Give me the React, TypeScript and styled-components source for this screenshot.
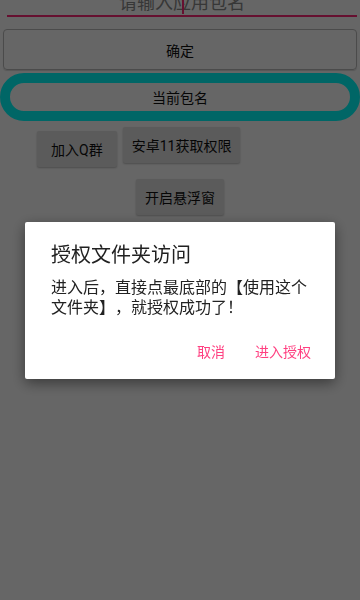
import React from 'react';
import styled, { createGlobalStyle } from 'styled-components';

const GlobalStyle = createGlobalStyle`
  html, body {
    margin: 0;
    padding: 0;
    background: #ffffff;
    font-family: Roboto, "Noto Sans CJK SC", sans-serif;
    overflow: hidden;
    text-spacing-trim: space-all;
  }
`;

const Page = styled.div`
  display: flex;
  flex-direction: column;
  margin-top: -13px;
  min-height: 613px;
  background: #ffffff;
`;

const InputField = styled.div`
  position: relative;
  margin: 0 3px 0 7px;
  height: 28px;
  border-bottom: 2px solid #ff2a78;
  display: flex;
  align-items: center;
  justify-content: center;
  font-size: 18px;
  color: #8a8a8a;
`;

const Caret = styled.span`
  position: absolute;
  left: 175px;
  top: 13px;
  width: 2px;
  height: 14px;
  background: #ff2a78;
`;

const WideButton = styled.div`
  margin: 12px 3px 0 3px;
  height: 39px;
  border: 1px solid #bcbcbc;
  border-radius: 4px;
  display: flex;
  align-items: center;
  justify-content: center;
  font-size: 14px;
  color: #111;
  box-shadow: 0 1px 1px rgba(0, 0, 0, 0.15);
`;

const PillButton = styled.div`
  margin-top: 3px;
  height: 28px;
  border: 10px solid #00ffff;
  border-radius: 24px;
  display: flex;
  align-items: center;
  justify-content: center;
  font-size: 14px;
  color: #111;
`;

const ButtonRow = styled.div<{ $center?: boolean }>`
  display: flex;
  gap: 6px;
  align-items: flex-start;
  justify-content: ${({ $center }) => ($center ? 'center' : 'flex-start')};
  padding-left: ${({ $center }) => ($center ? '0' : '37px')};
  margin-top: ${({ $center }) => ($center ? '12px' : '6px')};
`;

const GreyButton = styled.div<{ $drop?: number }>`
  height: 36px;
  padding: 0 ${({ $drop }) => ($drop ? '14px' : '9px')};
  margin-top: ${({ $drop }) => $drop || 0}px;
  background: #e3e3e3;
  border-radius: 2px;
  box-shadow: 0 1px 2px rgba(0, 0, 0, 0.25);
  display: flex;
  align-items: center;
  justify-content: center;
  font-size: 14px;
  color: #111;
`;

const Overlay = styled.div`
  position: fixed;
  inset: 0;
  background: rgba(0, 0, 0, 0.6);
  display: flex;
  align-items: center;
  justify-content: center;
`;

const Dialog = styled.div`
  width: 310px;
  box-sizing: border-box;
  padding: 20px 24px 10px 26px;
  background: #ffffff;
  border-radius: 2px;
  box-shadow: 0 4px 14px rgba(0, 0, 0, 0.45);
`;

const Title = styled.div`
  font-size: 20px;
  line-height: 26px;
  color: #212121;
`;

const Message = styled.div`
  margin-top: 10px;
  font-size: 16px;
  line-height: 20.5px;
  color: #222;
  text-spacing-trim: space-all;
`;

const Actions = styled.div`
  margin-top: 14px;
  display: flex;
  justify-content: flex-end;
  gap: 30px;
  height: 36px;
  align-items: center;
`;

const ActionButton = styled.div`
  font-size: 14px;
  color: #ff4081;
`;

const App: React.FC = () => {
  return (
    <>
      <GlobalStyle />
      <Page>
        <InputField>
          请输入应用包名
          <Caret />
        </InputField>
        <WideButton>确定</WideButton>
        <PillButton>当前包名</PillButton>
        <ButtonRow>
          <GreyButton $drop={4}>加入Q群</GreyButton>
          <GreyButton>安卓11获取权限</GreyButton>
        </ButtonRow>
        <ButtonRow $center>
          <GreyButton>开启悬浮窗</GreyButton>
        </ButtonRow>
      </Page>
      <Overlay>
        <Dialog>
          <Title>授权文件夹访问</Title>
          <Message>进入后，直接点最底部的【使用这个文件夹】，就授权成功了！</Message>
          <Actions>
            <ActionButton>取消</ActionButton>
            <ActionButton>进入授权</ActionButton>
          </Actions>
        </Dialog>
      </Overlay>
    </>
  );
};

export default App;
